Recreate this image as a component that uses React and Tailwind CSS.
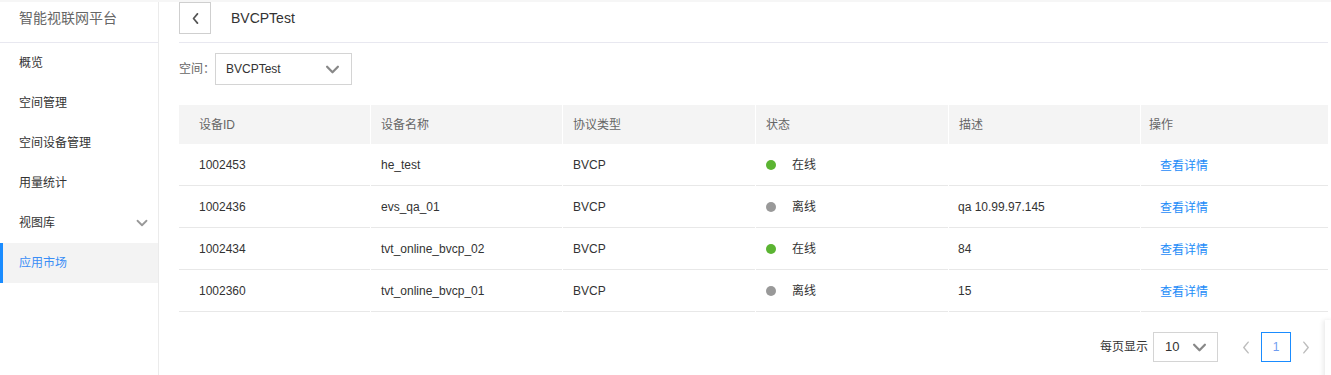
import React from 'react';

const menu = ['概览', '空间管理', '空间设备管理', '用量统计', '视图库', '应用市场'];

const rows = [
  { id: '1002453', name: 'he_test', type: 'BVCP', online: true, desc: '' },
  { id: '1002436', name: 'evs_qa_01', type: 'BVCP', online: false, desc: 'qa 10.99.97.145' },
  { id: '1002434', name: 'tvt_online_bvcp_02', type: 'BVCP', online: true, desc: '84' },
  { id: '1002360', name: 'tvt_online_bvcp_01', type: 'BVCP', online: false, desc: '15' },
];

const Chevron = ({ dir = 'down', className, stroke = '#888', width = 2.5 }) => {
  const pts = {
    down: '2,2 8,8 14,2',
    left: '7,1 2,7 7,13',
    right: '2,1 7,7 2,13',
  }[dir];
  const box = dir === 'down' ? '0 0 16 10' : '0 0 9 14';
  return (
    <svg viewBox={box} className={className} fill="none">
      <polyline points={pts} stroke={stroke} strokeWidth={width} strokeLinecap="round" strokeLinejoin="round" />
    </svg>
  );
};

const cols = 'grid grid-cols-[191px_191px_192px_192px_191px_1fr] gap-x-px';

export default function App() {
  return (
    <div className="relative w-[1331px] h-[375px] overflow-hidden bg-white text-[#333] font-['Liberation_Sans','Noto_Sans_CJK_SC',sans-serif]">
      <div className="h-[2px] bg-[#f6f6f6]" />
      <div className="flex h-[373px]">
        {/* Sidebar */}
        <aside className="w-[159px] shrink-0 border-r border-[#ebebeb]">
          <div className="h-[41px] border-b border-[#e8e8f0] pl-[19px] pt-[6px] text-[14px] leading-[20px] text-[#666]">
            智能视联网平台
          </div>
          {menu.map((m, i) => {
            const active = i === menu.length - 1;
            return (
              <div
                key={m}
                className={`relative flex items-center justify-between h-[40px] pl-[19px] pr-[10px] text-[12px] ${
                  active ? 'bg-[#f3f3f3] text-[#3a8ef6]' : 'text-[#333]'
                }`}
              >
                {active && <span className="absolute left-0 top-0 h-full w-[3px] bg-[#1a8cff]" />}
                <span>{m}</span>
                {m === '视图库' && <Chevron className="w-[12px] h-[8px]" stroke="#999" width={2.4} />}
              </div>
            );
          })}
        </aside>

        {/* Main */}
        <main className="flex-1 pl-[20px] pr-[3px]">
          <div className="h-[41px] border-b border-[#e8e8f0] flex items-start">
            <button className="w-[32px] h-[32px] border border-[#cfcfcf] flex items-center justify-center">
              <Chevron dir="left" className="w-[7px] h-[11px]" stroke="#555" width={2.2} />
            </button>
            <span className="ml-[20px] h-[32px] leading-[32px] text-[14px] text-[#333]">BVCPTest</span>
          </div>

          <div className="mt-[10px] flex items-center text-[12px]">
            <span className="text-[#666]">空间：</span>
            <div className="w-[137px] h-[32px] border border-[#d4d4d4] flex items-center justify-between pl-[10px] pr-[11px]">
              <span className="text-[#333]">BVCPTest</span>
              <Chevron className="w-[15px] h-[9px]" />
            </div>
          </div>

          {/* Table */}
          <div className="mt-[20px] text-[12px]">
            <div className={`${cols} h-[39px] text-[#666]`}>
              {['设备ID', '设备名称', '协议类型', '状态', '描述', '操作'].map((h, i) => (
                <div
                  key={h}
                  className={`bg-[#f4f4f4] flex items-center ${i === 0 ? 'pl-[20px]' : i === 5 ? 'pl-[8px]' : 'pl-[10px]'}`}
                >
                  {h}
                </div>
              ))}
            </div>
            {rows.map(r => (
              <div key={r.id} className={`${cols} h-[42px]`}>
                <div className="border-b border-[#e8e8e8] flex items-center pl-[20px] pt-[1px]">{r.id}</div>
                <div className="border-b border-[#e8e8e8] flex items-center pl-[10px] pt-[1px]">{r.name}</div>
                <div className="border-b border-[#e8e8e8] flex items-center pl-[10px] pt-[1px]">{r.type}</div>
                <div className="border-b border-[#e8e8e8] flex items-center pl-[10px] pt-[1px]">
                  <span className={`w-[10px] h-[10px] rounded-full ${r.online ? 'bg-[#5bb432]' : 'bg-[#999]'}`} />
                  <span className="ml-[16px]">{r.online ? '在线' : '离线'}</span>
                </div>
                <div className="border-b border-[#e8e8e8] flex items-center pl-[9px] pt-[1px]">{r.desc}</div>
                <div className="border-b border-[#e8e8e8] flex items-center pl-[19px] pt-[2px]">
                  <a className="text-[#1d8cf8] cursor-pointer">查看详情</a>
                </div>
              </div>
            ))}
          </div>

          {/* Pagination */}
          <div className="mt-[20px] flex items-center justify-end pr-[7px] text-[12px]">
            <span className="text-[#333]">每页显示</span>
            <div className="ml-[5px] w-[65px] h-[30px] border border-[#d4d4d4] flex items-center justify-between pl-[11px] pr-[10px]">
              <span className="text-[13px]">10</span>
              <Chevron className="w-[15px] h-[9px]" />
            </div>
            <div className="ml-[13px] w-[30px] h-[30px] flex items-center justify-center">
              <Chevron dir="left" className="w-[8px] h-[15px]" stroke="#bdbdbd" width={1.6} />
            </div>
            <div className="w-[30px] h-[30px] border border-[#1a8cff] flex items-center justify-center text-[#6f9cf0]">1</div>
            <div className="w-[30px] h-[30px] flex items-center justify-center">
              <Chevron dir="right" className="w-[8px] h-[15px]" stroke="#bdbdbd" width={1.6} />
            </div>
          </div>
        </main>
      </div>
      <div className="absolute left-[1325px] top-[320px] w-[10px] h-[60px] bg-white shadow-[-2px_0_4px_rgba(0,0,0,0.08)]" />
    </div>
  );
}
